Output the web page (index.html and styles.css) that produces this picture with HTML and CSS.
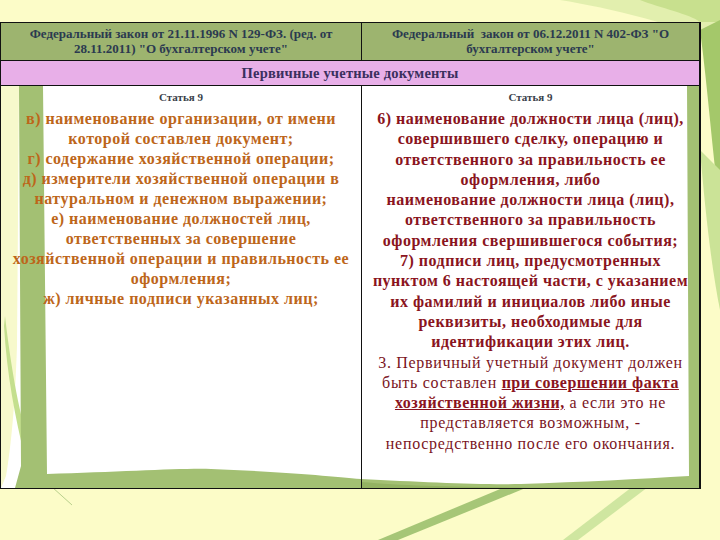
FILE: index.html
```html
<!DOCTYPE html>
<html lang="ru">
<head>
<meta charset="utf-8">
<title>Первичные учетные документы</title>
<link rel="stylesheet" href="styles.css">
</head>
<body>
<div class="page">
  <svg class="bg-deco" width="720" height="540" viewBox="0 0 720 540">
    <path d="M560 0 C610 8 680 25 720 45 L720 0 Z" fill="#e2efae"/>
    <path d="M640 0 C660 8 690 14 700 22 L720 22 L720 0 Z" fill="#c8e08e"/>
    <path d="M700 30 C708 90 712 150 720 210 L720 20 Z" fill="#a4c86a"/>
    <path d="M700 150 C706 220 712 270 720 310 L720 170 Z" fill="#cbe397"/>
    <path d="M505 487 L528 487 L398 540 L378 540 Z" fill="#a6c677"/>
    <path d="M632 487 L648 487 L578 540 L563 540 Z" fill="#cfe6a0"/>
    <path d="M52 487 L72 505" stroke="#b9d08c" stroke-width="1"/>
  </svg>
  <div class="sheet">
    <div class="row head">
      <div class="cell">Федеральный закон от 21.11.1996 N 129-ФЗ. (ред. от 28.11.2011) "О бухгалтерском учете"</div>
      <div class="cell">Федеральный&nbsp; закон от 06.12.2011 N 402-ФЗ "О бухгалтерском учете"</div>
    </div>
    <div class="row sub">Первичные учетные документы</div>
    <div class="row body">
      <svg class="paper" width="700" height="402" viewBox="0 0 700 402" preserveAspectRatio="none">
        <path d="M0 0 L18 0 L16 260 C14 320 10 360 5 390 L0 402 Z" fill="#f7f9cc"/>
        <path d="M4 230 C12 300 22 340 30 365 L24 372 C14 330 6 290 3 240 Z" fill="#c4df8e"/>
        <path d="M18 0 L42 0 L46 388 C120 386 180 382 210 383 C270 385 330 390 360 393 L360 402 L14 402 L20 380 Z" fill="#a3c073"/>
        <path d="M360 393 C420 396 480 399 520 398 C580 396 640 393 688 390 L686 0 L698 0 L698 402 L360 402 Z" fill="#a3c073"/>
        <path d="M360 396 C430 402 520 402 700 402 L360 402 Z" fill="#93b262"/>
      </svg>
      <div class="cell left">
        <p class="art">Статья 9</p>
        <p class="txt">в) наименование организации, от имени<br>которой составлен документ;<br>г) содержание хозяйственной операции;<br>д) измерители хозяйственной операции в<br>натуральном и денежном выражении;<br>е) наименование должностей лиц,<br>ответственных за совершение<br>хозяйственной операции и правильность ее<br>оформления;<br>ж) личные подписи указанных лиц;</p>
      </div>
      <div class="cell right">
        <p class="art">Статья 9</p>
        <p class="txt">6) наименование должности лица (лиц),<br>совершившего сделку, операцию и<br>ответственного за правильность ее<br>оформления, либо<br>наименование должности лица (лиц),<br>ответственного за правильность<br>оформления свершившегося события;<br>7) подписи лиц, предусмотренных<br>пунктом 6 настоящей части, с указанием<br>их фамилий и инициалов либо иные<br>реквизиты, необходимые для<br>идентификации этих лиц.<br><span class="norm">3. Первичный учетный документ должен<br>быть составлен <u class="em">при совершении факта<br>хозяйственной жизни,</u> а если это не<br>представляется возможным, -<br>непосредственно после его окончания.</span></p>
      </div>
    </div>
  </div>
</div>
</body>
</html>
```
FILE: styles.css
```css
html, body {
  margin: 0;
  padding: 0;
}
body {
  background: #fdfdc9;
  font-family: "Liberation Serif", "Times New Roman", "DejaVu Serif", serif;
}
.page {
  position: relative;
  width: 720px;
  height: 540px;
  overflow: hidden;
  background: #fcfcc8;
}
.bg-deco {
  position: absolute;
  left: 0;
  top: 0;
}
.sheet {
  position: relative;
  margin-top: 22px;
  border: 1px solid #111;
  border-right-width: 2px;
  box-sizing: border-box;
  width: 701px;
}
.row {
  display: grid;
  grid-template-columns: 360px 1fr;
}
.head {
  background: #9db46f;
  border-bottom: 1px solid #111;
  box-sizing: border-box;
  height: 38px;
}
.head .cell {
  text-align: center;
  font-size: 13px;
  font-weight: bold;
  line-height: 15px;
  color: #2b3a50;
  padding: 3px 14px 0;
}
.head .cell + .cell {
  border-left: 1px solid #111;
  padding: 3px 24px 0;
}
.sub {
  display: block;
  background: #e8afe8;
  height: 25px;
  box-sizing: border-box;
  border-bottom: 1px solid #111;
  text-align: center;
  font-size: 14.5px;
  line-height: 24px;
  color: #3a2f5e;
  font-weight: bold;
  letter-spacing: 0.2px;
}
.body {
  position: relative;
  height: 402px;
  background: #ffffff;
}
.paper {
  position: absolute;
  left: 0;
  top: 0;
}
.body .cell {
  position: relative;
  text-align: center;
}
.body .right {
  border-left: 1px solid #111;
}
.art {
  margin: 4px 0 0;
  font-size: 11px;
  line-height: 14px;
  color: #3a3f4a;
  font-weight: bold;
}
.txt {
  margin: 5px 0 0;
  font-size: 16px;
  line-height: 20px;
  font-weight: bold;
  letter-spacing: 0.5px;
}
.left .txt {
  color: #bd661a;
}
.right .txt {
  color: #8a1420;
  line-height: 20.3px;
}
.norm {
  font-weight: normal;
  color: #7a1422;
  letter-spacing: 0.7px;
}
.em {
  font-weight: bold;
  color: #8a1420;
  letter-spacing: 0.5px;
}
```
